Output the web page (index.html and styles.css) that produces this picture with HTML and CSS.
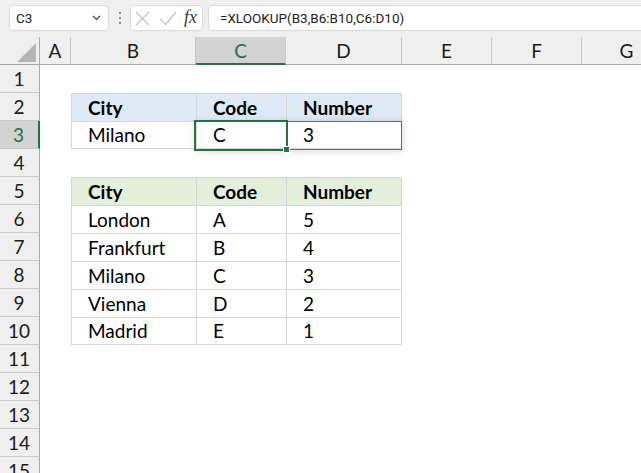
FILE: index.html
```html
<!DOCTYPE html>
<html>
<head>
<meta charset="utf-8">
<link rel="stylesheet" href="styles.css">
</head>
<body>
<div class="app">
  <div class="topbar">
    <div class="namebox">
      <span class="nb-text">C3</span>
      <svg class="chev" width="9" height="6" viewBox="0 0 9 6"><path d="M1 1L4.5 4.5L8 1" fill="none" stroke="#444" stroke-width="1.2"/></svg>
    </div>
    <div class="dots"><i></i><i></i><i></i></div>
    <div class="fxbox">
      <svg class="ico-x" width="15" height="15" viewBox="0 0 15 15"><path d="M1 1L14 14M14 1L1 14" stroke="#c2c2c2" stroke-width="1.2" fill="none"/></svg>
      <svg class="ico-check" width="18" height="15" viewBox="0 0 18 15"><path d="M1 8L6.5 13.5L17 1" stroke="#c2c2c2" stroke-width="1.2" fill="none"/></svg>
      <span class="fx">fx</span>
    </div>
    <div class="formula">=XLOOKUP(B3,B6:B10,C6:D10)</div>
  </div>

  <div class="sheet">
    <div class="row colheads">
      <div class="rh corner"><span class="tri"></span></div>
      <div class="ch w-a">A</div>
      <div class="ch w-b">B</div>
      <div class="ch w-c sel">C</div>
      <div class="ch w-d">D</div>
      <div class="ch w-e">E</div>
      <div class="ch w-f">F</div>
      <div class="ch w-g">G</div>
    </div>

    <div class="row"><div class="rh">1</div></div>
    <div class="row">
      <div class="rh">2</div>
      <div class="c w-a"></div>
      <div class="c w-b tc hb b">City</div>
      <div class="c w-c tc hb b">Code</div>
      <div class="c w-d tc tr hb b">Number</div>
    </div>
    <div class="row">
      <div class="rh sel">3</div>
      <div class="c w-a"></div>
      <div class="c w-b tc lb">Milano</div>
      <div class="c w-c tc lb">C</div>
      <div class="c w-d tc tr lb">3</div>
    </div>
    <div class="row"><div class="rh">4</div></div>
    <div class="row">
      <div class="rh">5</div>
      <div class="c w-a"></div>
      <div class="c w-b tc hg b">City</div>
      <div class="c w-c tc hg b">Code</div>
      <div class="c w-d tc tr hg b">Number</div>
    </div>
    <div class="row">
      <div class="rh">6</div>
      <div class="c w-a"></div>
      <div class="c w-b tc">London</div>
      <div class="c w-c tc">A</div>
      <div class="c w-d tc tr">5</div>
    </div>
    <div class="row">
      <div class="rh">7</div>
      <div class="c w-a"></div>
      <div class="c w-b tc">Frankfurt</div>
      <div class="c w-c tc">B</div>
      <div class="c w-d tc tr">4</div>
    </div>
    <div class="row">
      <div class="rh">8</div>
      <div class="c w-a"></div>
      <div class="c w-b tc">Milano</div>
      <div class="c w-c tc">C</div>
      <div class="c w-d tc tr">3</div>
    </div>
    <div class="row">
      <div class="rh">9</div>
      <div class="c w-a"></div>
      <div class="c w-b tc">Vienna</div>
      <div class="c w-c tc">D</div>
      <div class="c w-d tc tr">2</div>
    </div>
    <div class="row">
      <div class="rh">10</div>
      <div class="c w-a"></div>
      <div class="c w-b tc lb">Madrid</div>
      <div class="c w-c tc lb">E</div>
      <div class="c w-d tc tr lb">1</div>
    </div>
    <div class="row"><div class="rh">11</div></div>
    <div class="row"><div class="rh">12</div></div>
    <div class="row"><div class="rh">13</div></div>
    <div class="row"><div class="rh">14</div></div>
    <div class="row"><div class="rh">15</div></div>
  </div>

  <div class="spill"></div>
  <div class="selection"></div>
  <div class="handle"></div>
</div>
</body>
</html>
```

FILE: styles.css
```css
* { box-sizing: border-box; }
html, body { margin: 0; padding: 0; }
body {
  background: #ffffff;
  width: 641px;
  height: 473px;
  overflow: hidden;
}
.app {
  position: relative;
  width: 641px;
  height: 473px;
  overflow: hidden;
  font-family: "Lato", "Liberation Sans", sans-serif;
}

/* ---------- top bar ---------- */
.topbar {
  height: 37px;
  background: #efefef;
  display: flex;
  align-items: flex-start;
  padding-top: 5px;
}
.namebox {
  margin-left: 9px;
  width: 100px;
  height: 26px;
  background: #fff;
  border: 1px solid #dadada;
  border-radius: 4px;
  display: flex;
  align-items: center;
  justify-content: space-between;
  padding: 0 7px 0 6px;
}
.nb-text {
  font-family: "Roboto", "Liberation Sans", sans-serif;
  font-size: 13.5px;
  color: #222;
}
.dots {
  width: 21px;
  height: 26px;
  display: flex;
  flex-direction: column;
  align-items: center;
  justify-content: center;
  gap: 3px;
}
.dots i {
  display: block;
  width: 2px;
  height: 2px;
  background: #8c8c8c;
}
.fxbox {
  width: 73px;
  height: 26px;
  background: #fff;
  border: 1px solid #dadada;
  border-radius: 4px;
  display: flex;
  align-items: center;
  padding-left: 4px;
  gap: 9px;
}
.ico-check { margin-left: 0; }
.fx {
  font-family: "Liberation Serif", serif;
  font-style: italic;
  font-size: 18px;
  color: #3a3a3a;
  margin-left: -2px;
  line-height: 1;
  padding-bottom: 2px;
}
.formula {
  margin-left: 5px;
  flex: 1;
  height: 26px;
  background: #fff;
  border: 1px solid #dadada;
  border-right: none;
  border-radius: 4px 0 0 4px;
  font-family: "Roboto", "Liberation Sans", sans-serif;
  font-size: 13.5px;
  color: #222;
  line-height: 24px;
  padding-left: 11px;
}

/* ---------- sheet ---------- */
.sheet { display: flex; flex-direction: column; }
.row { display: flex; height: 28px; }

.rh {
  width: 40px;
  flex: none;
  background: #efefef;
  border-right: 1px solid #a9a9a9;
  border-bottom: 1px solid #c9c9c9;
  text-align: center;
  font-size: 19px;
  line-height: 27px;
  color: #1b1b1b;
  padding-right: 1px;
}
.rh.sel {
  background: #d3d3d3;
  color: #217346;
  border-right: 2px solid #217346;
}
.corner {
  position: relative;
  border-bottom: 1px solid #a9a9a9;
}
.tri {
  position: absolute;
  right: 3px;
  bottom: 2px;
  width: 0;
  height: 0;
  border-left: 19px solid transparent;
  border-bottom: 19px solid #b5b5b5;
}

.colheads { height: 28px; }
.ch {
  flex: none;
  background: #efefef;
  border-right: 1px solid #c9c9c9;
  border-bottom: 1px solid #a9a9a9;
  text-align: center;
  font-size: 19px;
  line-height: 28px;
  color: #1b1b1b;
}
.ch.sel {
  background: #d3d3d3;
  color: #217346;
  border-bottom: 2px solid #217346;
  line-height: 27px;
}

.w-a { width: 31px; }
.w-b { width: 125px; }
.w-c { width: 90px; }
.w-d { width: 116px; }
.w-e { width: 90px; }
.w-f { width: 90px; }
.w-g { width: 90px; }

.c {
  flex: none;
  height: 28px;
  font-size: 19px;
  line-height: 27px;
  color: #000;
  padding-left: 16px;
  white-space: nowrap;
}
.tc {
  border-left: 1px solid #d6d6d6;
  border-top: 1px solid #d6d6d6;
}
.tr { border-right: 1px solid #d6d6d6; }
.lb { border-bottom: 1px solid #d6d6d6; line-height: 26px; }
.hb { background: #dde9f4; }
.hg { background: #e2efda; }
.b { font-weight: 700; }

/* ---------- overlays ---------- */
.spill {
  position: absolute;
  left: 195px;
  top: 121px;
  width: 207px;
  height: 29px;
  border: 1px solid #3f6fc2;
  box-shadow: 0 1px 8px rgba(0, 0, 0, 0.16);
}
.selection {
  position: absolute;
  left: 194px;
  top: 120px;
  width: 94px;
  height: 31px;
  border: 2px solid #217346;
}
.handle {
  position: absolute;
  left: 283px;
  top: 146px;
  width: 7px;
  height: 7px;
  background: #217346;
  border: 1px solid #fff;
}
```
